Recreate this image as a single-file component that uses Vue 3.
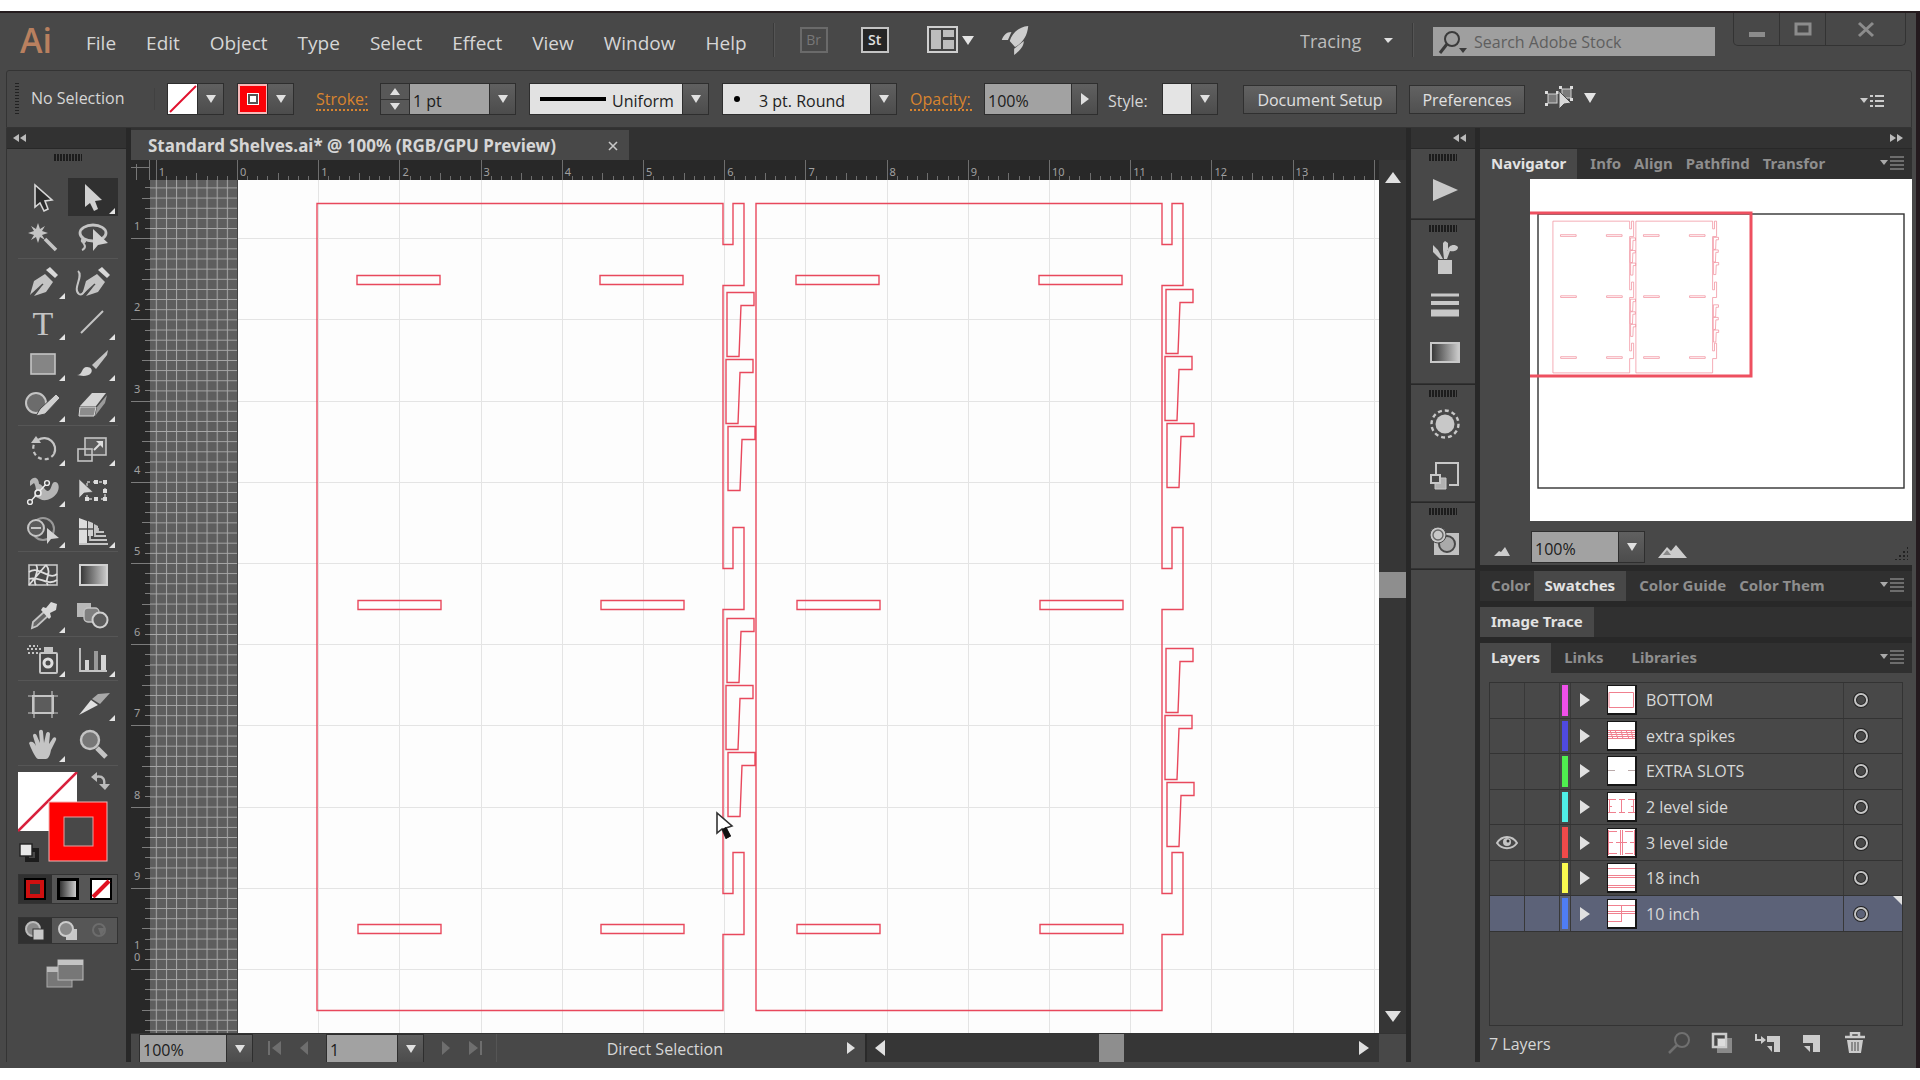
<script setup>
import { ref } from 'vue'

const menus = ['File', 'Edit', 'Object', 'Type', 'Select', 'Effect', 'View', 'Window', 'Help']

/* Tool glyphs are drawn around the origin of a 48 x 38 box. */
const g = '#c4c4c4'
const flyout = `<path d="M16 17h6v-6z" fill="#e4e4e4"/>`
const pen = `<path d="M-13 13 L-9 -1 L2 -8 L10 0 L3 10 L-9 14 L-1 4 L-13 13Z" fill="${g}"/><path d="M3 -12 L7 -15 L15 -7 L12 -4Z" fill="#d8d8d8"/><path d="M-12 13 L0 2" stroke="#484848" stroke-width="1.5"/>`
const toolGroups = [
  [
    { name: 'Selection', art: `<path d="M-8 -12V10L-3 6L1 14L5 12L2 4L9 3Z" fill="#2c2c2c" stroke="#d8d8d8" stroke-width="1.6"/>` },
    { name: 'Direct Selection', active: true, fly: true, art: `<path d="M-8 -13V10L-3 6L1 14L5 12L2 4L9 3Z" fill="#d0d0d0"/>` },
    { name: 'Magic Wand', art: `<path d="M-5 -15l2 6 5-3-3 5 6 2-6 2 3 5-5-3-2 6-2-6-5 3 3-5-6-2 6-2-3-5 5 3z" fill="${g}"/><path d="M2 1L13 12" stroke="${g}" stroke-width="3.5"/>` },
    { name: 'Lasso', art: `<ellipse cx="0" cy="-5" rx="13" ry="8" fill="none" stroke="${g}" stroke-width="2.8"/><path d="M-10 0c-4 5 3 5 2 3s-4-1-1 3-2 6-2 6" fill="none" stroke="${g}" stroke-width="2"/><path d="M0 -9V13L5 7L15 5Z" fill="#d0d0d0"/>` }
  ],
  [
    { name: 'Pen', fly: true, art: pen },
    { name: 'Curvature', art: `<g transform="translate(2 0)">${pen}</g><path d="M-15 -11c6 5-6 18 1 23 3 2 5-2 8-7" fill="none" stroke="${g}" stroke-width="2"/>` },
    { name: 'Type', fly: true, art: `<text x="0" y="12" text-anchor="middle" font-family="Liberation Serif, serif" font-size="34" fill="${g}">T</text>` },
    { name: 'Line', fly: true, art: `<path d="M-12 10L10 -12" stroke="${g}" stroke-width="2"/>` },
    { name: 'Rectangle', fly: true, art: `<rect x="-12" y="-10" width="24" height="20" fill="#858585" stroke="${g}" stroke-width="1.6"/>` },
    { name: 'Paintbrush', fly: true, art: `<path d="M-1 1L15 -14L14 -9L3 5Z" fill="${g}"/><path d="M-16 11c6 0 4-8 10-8 4 0 6 3 4 6-3 4-10 3-14 2z" fill="#d4d4d4"/>` },
    { name: 'Blob Brush', fly: true, art: `<circle cx="-7" cy="-2" r="10" fill="#6c6c6c" stroke="${g}" stroke-width="2"/><path d="M-7 11L-3 4L13 -11L17 -7L2 9Z" fill="#d0d0d0" stroke="#484848"/>` },
    { name: 'Eraser', fly: true, art: `<path d="M-13 1L-1 -12H13L3 1Z" fill="#d4d4d4"/><path d="M-13 2H3L1 11H-14Z" fill="#8c8c8c" stroke="#d8d8d8"/><path d="M4 2L14 -10L12 -2L2 11Z" fill="#9a9a9a"/>` }
  ],
  [
    { name: 'Rotate', fly: true, art: `<path d="M-5 -9A11 11 0 0 1 11 5" fill="none" stroke="${g}" stroke-width="2.2"/><path d="M11 5A11 11 0 1 1 -8 -7" fill="none" stroke="${g}" stroke-width="2.2" stroke-dasharray="4 3"/><path d="M-12 -6L-7 -13L-2 -6Z" fill="${g}"/>` },
    { name: 'Scale', fly: true, art: `<rect x="-8" y="-11" width="21" height="17" fill="#5c5c5c" stroke="${g}" stroke-width="1.6"/><rect x="-15" y="0" width="14" height="12" fill="none" stroke="${g}" stroke-width="1.6"/><path d="M1 1L8 -6" stroke="#ddd" stroke-width="2"/><path d="M3 -8H10V-1Z" fill="#ddd"/>` },
    { name: 'Width', fly: true, art: `<path d="M-13 -9C-9 -15 -4 -12 -4 -6C-1 -6 2 1 5 1C9 0 8 -8 12 -8C16 -8 17 -2 14 3C10 9 2 12 -3 9L-9 6C-6 2 -7 -4 -9 -7L-13 -4Z" fill="#b5b5b5"/><path d="M-13 12L4 -7" stroke="#eee" stroke-width="1.4"/><circle cx="-13" cy="12" r="2.4" fill="#484848" stroke="#eee" stroke-width="1.4"/><circle cx="-5" cy="3" r="3" fill="#484848" stroke="#eee" stroke-width="1.6"/><circle cx="4" cy="-7" r="2.4" fill="#484848" stroke="#eee" stroke-width="1.4"/>` },
    { name: 'Free Transform', art: `<rect x="-6" y="-8" width="18" height="17" fill="none" stroke="${g}" stroke-width="1.4" stroke-dasharray="3 3"/><path d="M1 -10h4v4h-4zM10 -10h4v4h-4zM10 -1h4v4h-4zM10 7h4v4h-4zM1 7h4v4h-4zM-8 7h4v4h-4z" fill="#ddd"/><path d="M-14 -11V8L-9 3L0 2Z" fill="#d4d4d4" stroke="#484848" stroke-width=".6"/>` },
    { name: 'Shape Builder', fly: true, art: `<circle cx="0" cy="-2" r="11" fill="none" stroke="#999" stroke-width="2"/><circle cx="-7" cy="-3" r="8" fill="#5a5a5a" stroke="${g}" stroke-width="2"/><path d="M-12 -3H-2" stroke="${g}" stroke-width="2"/><path d="M4 -3V13L8 8L16 7Z" fill="#d4d4d4"/>` },
    { name: 'Perspective Grid', fly: true, art: `<path d="M-14 -13L-6 -10V12H-14Z" fill="#ddd"/><path d="M-5 -10L0 -8V5H-5Z" fill="#d0d0d0"/><path d="M1 -7L5 -5V2H1Z" fill="${g}"/><path d="M2 0V5H13M-3 5V9H14M5 -3V1H11M-14 13H15" fill="none" stroke="${g}" stroke-width="1.8"/><path d="M-14 -2H1" stroke="#484848" stroke-width="1.4"/>` }
  ],
  [
    { name: 'Mesh', art: `<rect x="-14" y="-10" width="28" height="20" fill="#4a4a4a" stroke="${g}" stroke-width="1.6"/><path d="M-14 -3C-4 -10 6 6 14 -1M-14 4C-4 0 4 12 14 5M-7 -10C-2 -4 -12 4 -7 10M3 -10C10 -2 0 6 5 10M-14 10L-3 -3L3 -10" fill="none" stroke="#ddd" stroke-width="1.8"/>` },
    { name: 'Gradient', art: `<rect x="-13" y="-10" width="27" height="20" fill="url(#ramp)" stroke="#d0d0d0" stroke-width="2"/>` },
    { name: 'Eyedropper', fly: true, art: `<path d="M-11 12L-10 6L2 -5L6 -1L-6 10Z" fill="#666" stroke="${g}" stroke-width="1.8"/><path d="M0 -9L3 -8L8 -14L14 -12L13 -6L7 -3L8 1L6 3L-2 -6Z" fill="#d8d8d8"/>` },
    { name: 'Blend', art: `<rect x="-16" y="-13" width="14" height="14" fill="#b8b8b8"/><rect x="-9" y="-8" width="15" height="14" rx="4" fill="#808080" stroke="${g}" stroke-width="1.4"/><circle cx="7" cy="4" r="7.5" fill="#5c5c5c" stroke="#d0d0d0" stroke-width="2"/>` }
  ],
  [
    { name: 'Symbol Sprayer', fly: true, art: `<rect x="-3" y="-7" width="17" height="20" rx="1" fill="none" stroke="${g}" stroke-width="2"/><rect x="1" y="-13" width="9" height="5" fill="${g}"/><circle cx="5" cy="3" r="4" fill="none" stroke="#ddd" stroke-width="3"/><path d="M-16 -11h15M-15 -7h12M-14 -14h9" stroke="${g}" stroke-width="2" stroke-dasharray="2 2"/>` },
    { name: 'Graph', fly: true, art: `<path d="M-13 -12V11H14" fill="none" stroke="${g}" stroke-width="1.8"/><path d="M-8 0h4v10h-4zM8 -5h5v15h-5z" fill="#d4d4d4"/><path d="M1 -9h4v19h-4z" fill="#999"/>` }
  ],
  [
    { name: 'Artboard', art: `<rect x="-10" y="-8" width="20" height="17" fill="#5c5c5c" stroke="${g}" stroke-width="2"/><path d="M-9 -13V14M9 -13V14M-15 -8H15M-15 9H15" stroke="${g}" stroke-width="1.2"/>` },
    { name: 'Slice', fly: true, art: `<path d="M-14 11L-2 -4L5 1Z" fill="#e0e0e0"/><path d="M-1 -5L5 -10L17 -11L7 0Z" fill="#a8a8a8"/>` },
    { name: 'Hand', fly: true, art: `<path d="M-14 -2c2-3 6 0 7 3l-3-10c0-3 3-3 4 0l3 7-1-11c0-3 4-3 4 0l1 11 2-9c1-3 4-2 4 0l-1 10 4-6c2-2 4 0 3 2l-5 10c-1 6-3 9-5 9h-8c-3-1-8-13-9-16z" fill="${g}"/>` },
    { name: 'Zoom', art: `<circle cx="-3" cy="-5" r="9" fill="#777" stroke="${g}" stroke-width="2.4"/><path d="M4 3L13 12" stroke="${g}" stroke-width="5"/>` }
  ]
]

const dockGroups = [
  { size: 'h70', items: [`<path d="M-12 -11V11L13 0Z" fill="#c8c8c8"/>`] },
  { size: 'h164', items: [
    `<path d="M-7 2H7V16H-7Z" fill="#c8c8c8"/><path d="M-2 1L-7 -8L-12 -13L-12 -6L-5 1ZM2 1L5 -7C8 -6 13 -7 13 -11C9 -15 3 -12 3 -8L-1 -6ZM-1 1H2V-8H3V-15L0 -17L-2 -15V-8Z" fill="#c8c8c8"/>`,
    `<path d="M-14 -10H14" stroke="#c8c8c8" stroke-width="3"/><path d="M-14 -2H14" stroke="#c8c8c8" stroke-width="4"/><path d="M-14 8H14" stroke="#c8c8c8" stroke-width="7"/>`,
    `<rect x="-14" y="-9" width="28" height="19" fill="url(#ramp)" stroke="#c8c8c8" stroke-width="2"/>`
  ] },
  { size: 'h117', items: [
    `<circle r="9.5" fill="#c8c8c8"/><circle r="13.5" fill="none" stroke="#c8c8c8" stroke-width="2.4" stroke-dasharray="4 3"/>`,
    `<path d="M-9 0V-12H13V10H4" fill="none" stroke="#c8c8c8" stroke-width="2"/><path d="M-5 3H1V14H-10V9" fill="#b0b0b0" stroke="#c8c8c8"/><rect x="-14" y="0" width="9" height="8" fill="#484848" stroke="#c8c8c8" stroke-width="2"/>`
  ] },
  { size: 'h68', items: [`<rect x="-11" y="-9" width="25" height="22" fill="#c0c0c0"/><circle cx="2" cy="2" r="8" fill="#aaa" stroke="#484848" stroke-width="2"/><circle cx="-7" cy="-7" r="8" fill="#c8c8c8" stroke="#484848"/><circle cx="-7" cy="-7" r="5" fill="none" stroke="#666" stroke-width="1.4"/>`] }
]

const layers = [
  { name: 'BOTTOM', color: '#f050ea', art: 'M2 7.5H26.5V22.5H2Z' },
  { name: 'extra spikes', color: '#4f4ae0', art: 'M1 9.5H28M1 11.5H28M1 13.5H28M1 15.5H28M1 17.5H28M3 9L6 18M8 9L11 18M14 9L16 18M19 9L22 18M24 9L26 18' },
  { name: 'EXTRA SLOTS', color: '#4ff04f', art: 'M1 14.5H8M21 14.5H28', dim: true },
  { name: '2 level side', color: '#4ff0e8', art: 'M1 7.5H9M12 7.5H18M21 7.5H28M1 20.5H9M12 20.5H18M21 20.5H28M2 14.5H5M24 14.5H27M14.5 7V21M2.5 7V21M26.5 7V21' },
  { name: '3 level side', color: '#f04a4a', art: 'M2 3.5H10M18 3.5H26M1 14.5H6M9 14.5H20M23 14.5H28M2 25.5H10M18 25.5H26M13.5 2V27M15.5 2V27M1.5 2V27M27.5 2V27' },
  { name: '18 inch', color: '#fafa50', art: 'M1 5.5H28M1 12.5H28M1 14.5H28M1 22.5H28M1 24.5H28' },
  { name: '10 inch', color: '#4f7df5', art: 'M1 6.5H28M1 12.5H28M1 14.5H28M1 22.5H15M14.5 6V22' }
]
const visible = ref('3 level side')
const selected = ref('10 inch')

/* Cut lines of the shelf, in window units. */
const side = (x) => {
  const tab = (y) => `V${y + 41}H${x + 416}V${y}H${x + 427}V${y + 82}H${x + 406}`
  return `M${x} 203H${x + 406}${tab(203)}${tab(527)}${tab(852)}V1010H${x}Z`
}
const hook = (x, y) => `M${x} ${y}h27v13h-13l-2 51h-12z`
const slot = (x, y) => `M${x} ${y}h83v9h-83z`
const cuts = [
  side(317), side(756),
  ...[275, 600, 924].flatMap((y, i) => [357, 600, 796, 1039].map((x) => slot(x + (i ? 1 : 0), y))),
  hook(727, 292), hook(726, 359), hook(728, 426), hook(727, 618), hook(726, 685), hook(728, 752),
  hook(1166, 289), hook(1165, 356), hook(1167, 423), hook(1166, 648), hook(1165, 715), hook(1167, 782)
].join('')

const unit = 81.2
const majorsX = Array.from({ length: 26 }, (_, i) => ({ n: Math.abs(i - 1), x: 87 + (i - 1) * unit }))
const majorsY = Array.from({ length: 16 }, (_, i) => ({ n: i, y: -23 + i * unit }))
const labelsX = majorsX.slice(0, 15)
const labelsY = majorsY.slice(1, 10)
const ten = majorsY[10].y
const ticksX = majorsX.map(({ x }) => `M${Math.round(x) + 0.5} 0V20` + [1, 2, 3, 4, 5, 6, 7].map((k) => `M${Math.round(x + k * unit / 8) + 0.5} ${k === 4 ? 13 : 16}V20`).join('')).join('')
const ticksY = majorsY.map(({ y }) => `M0 ${Math.round(y) + 0.5}H19` + [1, 2, 3, 4, 5, 6, 7].map((k) => `M${k === 4 ? 11 : 14} ${Math.round(y + k * unit / 8) + 0.5}H19`).join('')).join('')
</script>

<template>
  <div class="page">
    <svg class="defs" width="0" height="0">
      <defs>
        <linearGradient id="ramp"><stop offset="0" stop-color="#333" /><stop offset="1" stop-color="#ccc" /></linearGradient>
      </defs>
    </svg>
    <div class="frame">
      <header class="menubar">
        <span class="logo">Ai</span>
        <nav class="menus"><button v-for="m in menus" :key="m" type="button">{{ m }}</button></nav>
        <i class="rule"></i>
        <div class="apps">
          <button type="button" class="sq off">Br</button>
          <button type="button" class="sq on">St</button>
          <button type="button" class="arrange" aria-label="Arrange documents">
            <svg width="48" height="28"><rect width="31" height="27" fill="#cfcfcf" /><path d="M2 2H29V25H2Z" fill="#444" /><path d="M4 4H14V23H4ZM16 4H27V11H16ZM16 14H27V23H16Z" fill="#bdbdbd" /><path d="M35 10H47L41 19Z" fill="#e4e4e4" /></svg>
          </button>
          <button type="button" aria-label="GPU performance">
            <svg width="30" height="30" viewBox="0 0 32 34"><path d="M31 1C20 2 13 9 10 18L16 25C25 20 30 12 31 1ZM12 8C6 8 3 12 1 17L8 17ZM26 18C26 25 20 30 15 34L15 27Z" fill="#cdcdcd" /></svg>
          </button>
        </div>
        <div class="workspace-pick">
          <select aria-label="Workspace"><option>Tracing</option></select>
          <svg width="10" height="6"><path d="M0 0H9L4 5Z" fill="#e0e0e0" /></svg>
        </div>
        <i class="rule"></i>
        <label class="search">
          <svg width="32" height="28"><circle cx="15" cy="11" r="7" fill="none" stroke="#3a3a3a" stroke-width="2" /><path d="M10 16L3 25" stroke="#3a3a3a" stroke-width="3" /><path d="M22 20H30L26 25Z" fill="#3a3a3a" /></svg>
          <input type="text" placeholder="Search Adobe Stock" aria-label="Search Adobe Stock" />
        </label>
        <div class="winbtns">
          <button type="button" aria-label="Minimize"><svg width="18" height="18"><path d="M1 12H17V17H1Z" fill="#8c8c8c" /></svg></button>
          <button type="button" aria-label="Maximize"><svg width="18" height="18"><rect x="2" y="4" width="14" height="10" fill="none" stroke="#8c8c8c" stroke-width="3" /></svg></button>
          <button type="button" aria-label="Close" class="close"><svg width="18" height="18"><path d="M2 3L16 16M16 3L2 16" stroke="#8c8c8c" stroke-width="3" /></svg></button>
        </div>
      </header>

      <section class="control">
        <i class="vgrip"></i>
        <span class="nosel">No Selection</span>
        <div class="combo fill">
          <button type="button" aria-label="Fill" class="chip"><svg width="30" height="30"><rect width="30" height="30" fill="#fff" /><path d="M2 28L28 2" stroke="#e0102c" stroke-width="2" /></svg></button>
          <button type="button" class="drop" aria-label="Fill swatches"><i class="tri"></i></button>
        </div>
        <div class="combo strokec">
          <button type="button" aria-label="Stroke color" class="chip"><svg width="30" height="30"><rect width="30" height="30" fill="#f6b8b8" /><rect x="2" y="2" width="26" height="26" fill="#fb0007" /><rect x="9" y="9" width="12" height="12" fill="#fff" /><rect x="10" y="10" width="10" height="10" fill="#555" /><rect x="12" y="12" width="6" height="6" fill="#fff" /></svg></button>
          <button type="button" class="drop" aria-label="Stroke swatches"><i class="tri"></i></button>
        </div>
        <label class="orange" for="weight">Stroke:</label>
        <div class="combo weight">
          <div class="spin"><button type="button" aria-label="Increase"><i class="tri up small"></i></button><button type="button" aria-label="Decrease"><i class="tri small"></i></button></div>
          <input id="weight" type="text" value="1 pt" />
          <button type="button" class="drop" aria-label="Weights"><i class="tri"></i></button>
        </div>
        <div class="combo profile">
          <svg width="76" height="28"><path d="M10 15H76" stroke="#000" stroke-width="4" /></svg>
          <select aria-label="Width profile"><option>Uniform</option></select>
          <span class="drop"><i class="tri"></i></span>
        </div>
        <div class="combo brush">
          <svg width="30" height="28"><circle cx="14" cy="15" r="3" /></svg>
          <select aria-label="Brush"><option>3 pt. Round</option></select>
          <span class="drop"><i class="tri"></i></span>
        </div>
        <label class="orange" for="opacity">Opacity:</label>
        <div class="combo opacity">
          <input id="opacity" type="text" value="100%" />
          <button type="button" class="drop" aria-label="Opacity slider"><i class="tri right"></i></button>
        </div>
        <span class="stylelabel">Style:</span>
        <div class="combo style">
          <button type="button" aria-label="Graphic style" class="chip plain"></button>
          <button type="button" class="drop" aria-label="Graphic styles"><i class="tri"></i></button>
        </div>
        <button type="button" class="btn setup">Document Setup</button>
        <button type="button" class="btn prefs">Preferences</button>
        <button type="button" class="similar" aria-label="Select similar">
          <svg width="52" height="24"><g fill="#7a7a7a" stroke="#cfcfcf"><rect x="3" y="8" width="9" height="9" /><rect x="17" y="3" width="9" height="9" /></g><path d="M0 5h3v3h-3zM11 5h3v3h-3zM0 17h3v3h-3zM14 0h3v3h-3zM25 0h3v3h-3zM25 12h3v3h-3z" fill="#ddd" /><path d="M14 5V23L19 18L26 17Z" fill="#d8d8d8" stroke="#484848" /><path d="M39 7H51L45 17Z" fill="#e4e4e4" /></svg>
        </button>
        <button type="button" class="panelmenu" aria-label="Control panel menu">
          <svg width="24" height="14"><path d="M0 4H8L4 9Z" fill="#ccc" /><path d="M10 2H13M10 7H13M10 12H13M15 2H24M15 7H24M15 12H24" stroke="#ccc" stroke-width="2" /></svg>
        </button>
      </section>

      <main class="work">
        <aside class="tools">
          <div class="colhead"><svg width="13" height="8"><path d="M6 0V8L0 4ZM13 0V8L7 4Z" fill="#bbb" /></svg></div>
          <div class="toolbody">
            <i class="grip"></i>
            <div v-for="(grp, gi) in toolGroups" :key="gi" class="tgroup">
              <button v-for="t in grp" :key="t.name" type="button" :aria-label="t.name" :class="{ active: t.active }">
                <svg width="48" height="38" viewBox="-24 -19 48 38" v-html="t.art + (t.fly ? flyout : '')"></svg>
              </button>
            </div>
            <svg class="fillstroke" width="100" height="92">
              <rect width="59" height="59" fill="#fff" /><path d="M0 59L59 0" stroke="#d8203c" stroke-width="2.5" />
              <rect x="31" y="30" width="58" height="59" fill="#ff0000" stroke="#f3b4b4" /><rect x="46" y="45" width="29" height="29" fill="#484848" stroke="#e8a0a0" />
              <path d="M77 5C86 3 87 8 86 14" fill="none" stroke="#bbb" stroke-width="2.4" /><path d="M73 5L79 0V10ZM81 12H92L87 18Z" fill="#bbb" />
              <rect x="9" y="78" width="10" height="10" fill="none" stroke="#1c1c1c" stroke-width="4" /><rect x="2" y="72" width="12" height="12" fill="#e8e8e8" stroke="#222" stroke-width="1.4" />
            </svg>
            <div class="modes">
              <button type="button" class="dark" aria-label="Color"><svg width="22" height="22"><rect width="22" height="22" /><rect x="4" y="4" width="14" height="14" fill="#333" stroke="#d01010" stroke-width="4" /></svg></button>
              <button type="button" aria-label="Gradient"><svg width="22" height="22"><rect width="22" height="22" /><rect x="3" y="3" width="16" height="16" fill="url(#ramp)" /></svg></button>
              <button type="button" aria-label="None"><svg width="22" height="22"><rect width="22" height="22" /><rect x="2" y="2" width="18" height="18" fill="#fff" /><path d="M3 19L19 3" stroke="#e01020" stroke-width="4" /></svg></button>
            </div>
            <div class="modes draw">
              <button type="button" class="dark" aria-label="Draw normal"><svg width="22" height="20"><circle cx="9" cy="8" r="7" fill="#8a8a8a" stroke="#bbb" stroke-width="2" /><rect x="9" y="8" width="11" height="11" fill="#c8c8c8" stroke="#333" /></svg></button>
              <button type="button" aria-label="Draw behind"><svg width="22" height="20"><rect x="9" y="8" width="11" height="11" fill="#c8c8c8" /><circle cx="9" cy="8" r="7" fill="#8a8a8a" stroke="#ccc" stroke-width="2" /></svg></button>
              <button type="button" aria-label="Draw inside"><svg width="22" height="20"><circle cx="9" cy="9" r="6" fill="none" stroke="#6c6c6c" stroke-width="2" /><path d="M8 7H16L11 15Z" fill="#6c6c6c" /></svg></button>
            </div>
            <button type="button" class="screenmode" aria-label="Screen mode"><svg width="38" height="30"><rect x="1" y="8" width="25" height="20" fill="#777" stroke="#aaa" /><path d="M1 8H26V13H1Z" fill="#bbb" /><rect x="12" y="1" width="25" height="20" fill="#777" stroke="#bbb" /><path d="M12 1H37V6H12Z" fill="#c4c4c4" /></svg></button>
          </div>
        </aside>

        <section class="doc">
          <div class="tabbar"><div class="doctab"><span>Standard Shelves.ai* @ 100% (RGB/GPU Preview)</span><button type="button" aria-label="Close document"><svg width="10" height="10"><path d="M1 1L9 9M9 1L1 9" stroke="#c8c8c8" stroke-width="1.6" /></svg></button></div></div>
          <div class="docbody">
            <div class="sheet">
              <div class="rulertop">
                <svg class="origin"><path d="M0 7.5H18M5.5 4V20M18.5 0V20" stroke="#777" /></svg>
                <svg class="rx">
                  <path :d="ticksX" stroke="#6e6e6e" />
                  <text v-for="m in labelsX" :key="m.x" :x="m.x + 3" y="16">{{ m.n }}</text>
                </svg>
              </div>
              <div class="sheetrow">
                <svg class="ry">
                  <path :d="ticksY" stroke="#7c7c7c" />
                  <text v-for="m in labelsY" :key="m.y" x="3" :y="m.y - 8">{{ m.n }}</text>
                  <text x="3" :y="ten - 20">1</text>
                  <text x="3" :y="ten - 8">0</text>
                </svg>
                <svg class="canvas">
                  <defs>
                    <pattern id="mesh" x="87" y="-23" width="10.15" height="10.15" patternUnits="userSpaceOnUse"><path d="M0.5 0V11M0 0.5H11" stroke="#a8a8a8" fill="none" /></pattern>
                  </defs>
                  <rect width="88" height="100%" fill="#5e5e5e" /><rect width="88" height="100%" fill="url(#mesh)" />
                  <rect x="88" width="100%" height="100%" fill="#fdfdfd" />
                  <path d="M87.5 0V2000" stroke="#444" />
                  <path :d="majorsX.slice(2).map((m) => `M${Math.round(m.x) + 0.5} 0V2000`).join('')" stroke="#e4e4e4" />
                  <path :d="majorsY.map((m) => `M88 ${Math.round(m.y) + 0.5}H3000`).join('')" stroke="#e4e4e4" />
                  <g transform="translate(-150 -179.5)"><path :d="cuts" fill="none" stroke="#e8485c" stroke-width="1.4" /></g>
                  <path d="M567 633V653L572 649L576 658L580 656L576 648L582 646Z" fill="#fff" stroke="#333" stroke-width="1.6" /><path d="M572 649L576 659L581 656L576 647Z" fill="#111" />
                </svg>
              </div>
            </div>
            <div class="vscroll"><button type="button" aria-label="Scroll up"><i class="tri up big"></i></button><i class="t1"></i><i class="thumb"></i><i class="t2"></i><button type="button" aria-label="Scroll down"><i class="tri big"></i></button></div>
          </div>
          <footer class="status">
            <div class="combo low zoomc"><input type="text" value="100%" aria-label="Zoom" /><button type="button" class="drop" aria-label="Zoom levels"><i class="tri"></i></button></div>
            <button type="button" class="nav" aria-label="First"><svg width="14" height="14"><path d="M1 0V14" stroke="#6e6e6e" stroke-width="2" /><path d="M13 0V14L4 7Z" fill="#6e6e6e" /></svg></button>
            <button type="button" class="nav" aria-label="Previous"><svg width="14" height="14"><path d="M10 0V14L2 7Z" fill="#6e6e6e" /></svg></button>
            <div class="combo low pagec"><input type="text" value="1" aria-label="Artboard" /><button type="button" class="drop" aria-label="Artboards"><i class="tri"></i></button></div>
            <button type="button" class="nav" aria-label="Next"><svg width="14" height="14"><path d="M4 0V14L12 7Z" fill="#6e6e6e" /></svg></button>
            <button type="button" class="nav" aria-label="Last"><svg width="14" height="14"><path d="M13 0V14" stroke="#6e6e6e" stroke-width="2" /><path d="M1 0V14L10 7Z" fill="#6e6e6e" /></svg></button>
            <div class="toolname"><span>Direct Selection</span><i class="tri right"></i></div>
            <div class="hscroll"><button type="button" aria-label="Scroll left"><i class="tri left big"></i></button><i class="t1"></i><i class="thumb"></i><i class="t2"></i><button type="button" aria-label="Scroll right"><i class="tri right big"></i></button></div>
            <i class="corner"></i>
          </footer>
        </section>

        <aside class="dock">
          <div class="colhead mid"><svg width="13" height="8"><path d="M6 0V8L0 4ZM13 0V8L7 4Z" fill="#bbb" /></svg></div>
          <div v-for="(d, di) in dockGroups" :key="di" class="dgroup" :class="d.size">
            <i class="grip"></i>
            <button v-for="(a, ai) in d.items" :key="ai" type="button" aria-label="Panel"><svg width="48" height="38" viewBox="-24 -19 48 38" v-html="a"></svg></button>
          </div>
          <div class="rest"></div>
        </aside>

        <aside class="panels">
          <div class="colhead end"><svg width="13" height="8"><path d="M0 0V8L6 4ZM7 0V8L13 4Z" fill="#bbb" /></svg></div>
          <section class="panel">
            <div class="tabs"><button type="button" class="cur">Navigator</button><button type="button">Info</button><button type="button">Align</button><button type="button">Pathfind</button><button type="button">Transfor</button><svg class="pm" width="24" height="14"><path d="M0 4H8L4 9Z" fill="#aaa" /><path d="M10 1H24M10 5H24M10 9H24M10 13H24" stroke="#aaa" /></svg></div>
            <div class="navview">
              <svg width="382" height="342">
                <rect width="382" height="342" fill="#fff" />
                <rect x="8" y="35" width="366" height="274" fill="none" stroke="#333" stroke-width="1.4" />
                <g transform="translate(-37 4) scale(0.189 0.188)"><path :d="cuts" fill="none" stroke="#f08a98" vector-effect="non-scaling-stroke" stroke-width="0.7" /></g>
                <path d="M0 34H221V197H0" fill="none" stroke="#ee5060" stroke-width="3" />
              </svg>
            </div>
            <div class="navzoom">
              <svg width="16" height="9"><path d="M0 9L5 4L7 5L11 0L16 9Z" fill="#ccc" /></svg>
              <div class="combo"><input type="text" value="100%" aria-label="Navigator zoom" /><button type="button" class="drop" aria-label="Zoom levels"><i class="tri"></i></button></div>
              <svg width="30" height="13"><path d="M0 13L9 2L13 6L18 0L29 13Z" fill="#ccc" /><path d="M5 10L9 5L13 10Z" fill="#888" /></svg>
              <i class="resize"></i>
            </div>
          </section>
          <section class="panel">
            <div class="tabs"><button type="button" class="first">Color</button><button type="button" class="cur">Swatches</button><button type="button">Color Guide</button><button type="button">Color Them</button><svg class="pm" width="24" height="14"><path d="M0 4H8L4 9Z" fill="#aaa" /><path d="M10 1H24M10 5H24M10 9H24M10 13H24" stroke="#aaa" /></svg></div>
          </section>
          <section class="panel"><div class="tabs"><button type="button" class="cur">Image Trace</button></div></section>
          <section class="panel grow">
            <div class="tabs"><button type="button" class="cur">Layers</button><button type="button">Links</button><button type="button" class="wide">Libraries</button><svg class="pm" width="24" height="14"><path d="M0 4H8L4 9Z" fill="#aaa" /><path d="M10 1H24M10 5H24M10 9H24M10 13H24" stroke="#aaa" /></svg></div>
            <div class="list">
              <ul>
                <li v-for="l in layers" :key="l.name" :class="{ sel: l.name === selected }" @click="selected = l.name">
                  <span class="eye"><svg v-if="l.name === visible" width="22" height="16"><path d="M1 8C6 0 16 0 21 8C16 15 6 15 1 8Z" fill="#484848" stroke="#c4c4c4" stroke-width="2" /><circle cx="11" cy="7" r="4" fill="#c4c4c4" /><circle cx="12" cy="6" r="1.5" fill="#333" /></svg></span>
                  <span class="lock"></span>
                  <span class="bar"><i :style="{ background: l.color }"></i></span>
                  <span class="open"><i class="tri right big"></i></span>
                  <svg class="thumbnail" width="30" height="30"><rect width="30" height="30" fill="#161616" /><rect x="1" y="1" width="27" height="27" fill="#fff" /><path :d="l.art" fill="none" :stroke="l.dim ? '#b9a9a9' : '#f0808f'" /></svg>
                  <span class="lname">{{ l.name }}</span>
                  <span class="target"><svg width="18" height="18"><circle cx="9" cy="9" r="6" fill="none" stroke="#222" stroke-width="4" /><circle cx="9" cy="9" r="6" fill="none" stroke="#c4c4c4" stroke-width="2" /></svg></span>
                  <svg class="notch" width="9" height="9"><path v-if="l.name === selected" d="M0 0H9V9Z" fill="#e0e0e0" /></svg>
                </li>
              </ul>
            </div>
            <div class="lfoot">
              <span>7 Layers</span>
              <button type="button" aria-label="Locate"><svg width="22" height="22"><circle cx="14" cy="8" r="7" fill="none" stroke="#707070" stroke-width="2" /><path d="M9 13L1 21" stroke="#707070" stroke-width="2.5" /></svg></button>
              <button type="button" aria-label="Clipping mask"><svg width="22" height="22"><rect x="6" y="6" width="15" height="15" fill="#8a8a8a" /><rect x="2" y="2" width="13" height="13" fill="none" stroke="#ccc" stroke-width="2.5" /><rect x="7" y="7" width="7" height="7" fill="#ddd" /></svg></button>
              <button type="button" aria-label="New sublayer"><svg width="26" height="22"><path d="M2 2V8H9" fill="none" stroke="#ccc" stroke-width="2" /><path d="M7 4L12 8L7 12Z" fill="#ccc" /><path d="M13 4H26V20H20V10H13Z" fill="#ccc" /><path d="M13 14H18V20Z" fill="#ccc" /></svg></button>
              <button type="button" aria-label="New layer"><svg width="22" height="22"><path d="M2 3H19V20H12V11H2Z" fill="#ccc" /><path d="M3 14H9V20Z" fill="#ccc" /></svg></button>
              <button type="button" aria-label="Delete"><svg width="22" height="22"><path d="M1 5H21M7 4V1H15V4" fill="none" stroke="#ccc" stroke-width="2.5" /><path d="M3 8H19L17 21H5Z" fill="#ccc" /><path d="M8 10V19M11 10V19M14 10V19" stroke="#484848" /></svg></button>
            </div>
          </section>
        </aside>
      </main>
    </div>
  </div>
</template>

<style>
body { margin: 0; background: #fff; }
</style>

<style scoped>
* { box-sizing: border-box; }
.page { min-height: 100vh; padding: 11px 0 12px; display: flex; background: #fff; font: 16px/20px "Open Sans", "Noto Sans", sans-serif; color: #d6d6d6; }
.defs { position: absolute; }
.frame { flex: 1; min-width: 0; display: flex; flex-direction: column; background: #484848; border-top: 2px solid #241c1e; border-right: 4px solid #241a1e; padding: 0 4px 6px 6px; }
button { font: inherit; color: inherit; background: none; border: 0; padding: 0; margin: 0; display: flex; align-items: center; justify-content: center; white-space: nowrap; }
svg { display: block; flex: none; }
i { display: block; font-style: normal; }
input, select { font: inherit; margin: 0; border: 0; border-radius: 0; background: none; outline: 0; min-width: 0; appearance: none; }

.tri { width: 0; height: 0; border: 5px solid transparent; border-top: 8px solid #e0e0e0; border-bottom: 0; }
.tri.big { border-width: 8px; border-top-width: 11px; border-bottom-width: 0; }
.tri.up { border-top: 0; border-bottom: 8px solid #e0e0e0; }
.tri.up.big { border-bottom-width: 11px; }
.tri.small { border-width: 5px; border-top-width: 7px; border-bottom-width: 0; }
.tri.up.small { border-top-width: 0; border-bottom-width: 7px; }
.tri.right { border: 6px solid transparent; border-left: 8px solid #e0e0e0; border-right: 0; }
.tri.right.big { border-width: 7px 0 7px 10px; }
.tri.left.big { border: 8px solid transparent; border-right: 10px solid #e0e0e0; border-left: 0; }

.menubar { height: 57px; display: flex; align-items: center; padding: 0 6px 4px 14px; }
.logo { width: 66px; font-size: 34px; line-height: 36px; font-weight: 600; color: #b9805f; }
.menus { display: flex; gap: 30px; font-size: 19px; line-height: 24px; margin-top: 7px; }
.rule { width: 2px; height: 34px; border-left: 1px solid #3a3a3a; border-right: 1px solid #555; }
.menus + .rule { margin-left: 26px; }
.apps { display: flex; align-items: center; margin-left: 25px; flex: 1; }
.sq { width: 28px; height: 26px; border: 2px solid #6a6a6a; color: #777; font-size: 14px; line-height: 20px; }
.sq.on { margin-left: 33px; border-color: #c4c4c4; background: #262626; color: #e0e0e0; font-weight: 600; }
.arrange { margin-left: 38px; }
.arrange + button { margin-left: 25px; }
.workspace-pick { display: flex; align-items: center; width: 112px; margin-top: 2px; }
.workspace-pick select { width: 84px; color: #bdbdbd; font-size: 18px; line-height: 24px; padding: 0; }
.search { display: flex; align-items: center; width: 282px; height: 29px; margin-left: 19px; background: #9f9f9f; padding-left: 4px; margin-top: 4px; }
.search input { flex: 1; margin-left: 3px; color: #333; }
.search input::placeholder { color: #5e5e5e; opacity: 1; }
.winbtns { display: flex; align-self: flex-start; height: 33px; margin-left: 18px; border: 1px solid #333; border-top: 0; border-radius: 0 0 5px 5px; }
.winbtns button { width: 46px; border-right: 1px solid #333; }
.winbtns .close { width: 79px; border: 0; }

.control { height: 58px; display: flex; align-items: center; border: 1px solid #343434; padding-left: 8px; border-radius: 3px 3px 0 0; }
.vgrip { width: 4px; height: 32px; background: repeating-linear-gradient(#222 0 1px, #484848 1px 3px); }
.nosel { width: 124px; margin-left: 12px; padding-bottom: 2px; border-right: 1px solid #414141; white-space: nowrap; }
.combo { display: flex; height: 32px; border: 1px solid #2e2e2e; }
.combo .drop { width: 26px; display: flex; align-items: center; justify-content: center; background: linear-gradient(#606060, #4c4c4c); border-left: 1px solid #2e2e2e; flex: none; }
.combo input { flex: 1; width: 0; background: #a2a2a2; color: #1c1c1c; padding: 3px 0 0 3px; }
.combo select { flex: 1; color: #222; padding: 3px 0 0; }
.chip { width: 30px; overflow: hidden; }
.chip.plain { background: #e4e4e4; width: 28px; }
.fill { margin-left: 12px; width: 57px; }
.strokec { margin-left: 13px; width: 57px; }
.orange { color: #d9842f; border-bottom: 2px dotted #d9842f; line-height: 19px; margin: 3px 0 0 22px; width: 52px; white-space: nowrap; }
.weight { margin-left: 12px; width: 136px; }
.spin { width: 29px; display: flex; flex-direction: column; border-right: 1px solid #2e2e2e; }
.spin button { flex: 1; background: #585858; }
.spin button + button { border-top: 1px solid #333; }
.profile { margin-left: 13px; width: 180px; background: #e2e2e2; }
.profile select { margin-left: 6px; }
.brush { margin-left: 13px; width: 175px; background: #e2e2e2; }
.brush select { margin-left: 6px; }
.brush + .orange { margin-left: 13px; width: 62px; }
.opacity { margin-left: 12px; width: 114px; }
.stylelabel { margin: 3px 0 0 10px; width: 54px; }
.style { width: 56px; }
.btn { height: 29px; margin-top: 1px; border: 1px solid #303030; background: linear-gradient(#626262, #505050); color: #e0e0e0; padding-top: 1px; }
.setup { width: 154px; margin-left: 25px; }
.prefs { width: 116px; margin-left: 12px; }
.similar { margin-left: 20px; padding-bottom: 2px; }
.panelmenu { margin: 3px 27px 0 auto; }

.work { flex: 1; display: flex; background: #282828; border-left: 1px solid #343434; }
.colhead { height: 20px; background: #323232; display: flex; align-items: center; padding: 0 6px; }
.colhead.mid { justify-content: center; padding-left: 38px; }
.colhead.end { justify-content: flex-end; padding-right: 9px; }
.grip { width: 28px; height: 7px; background: repeating-linear-gradient(90deg, #1c1c1c 0 2px, #484848 2px 3px); margin: 0 auto; flex: none; }
.tools { width: 119px; margin-right: 5px; display: flex; flex-direction: column; }
.toolbody { flex: 1; margin-top: 1px; background: #484848; padding: 5px 8px 0 11px; display: flex; flex-direction: column; }
.toolbody .grip { margin-bottom: 15px; }
.tgroup { display: grid; grid-template-columns: 1fr 1fr; grid-auto-rows: 41px; border-bottom: 1px solid #565656; margin-bottom: 2px; }
.tgroup button.active { background: #303030; height: 38px; align-self: center; }
.fillstroke { margin-top: 4px; }
.modes { display: flex; height: 30px; border: 1px solid #333; margin-top: 10px; background: #565656; }
.modes button { flex: 1; }
.modes .dark { background: #303030; }
.modes.draw { height: 27px; margin-top: 13px; }
.screenmode { margin: 15px auto 0; padding-right: 6px; }

.doc { flex: 1; min-width: 0; display: flex; flex-direction: column; }
.tabbar { height: 32px; padding-top: 2px; background: #313131; display: flex; }
.doctab { width: 498px; background: #484848; display: flex; align-items: center; justify-content: space-between; padding: 1px 11px 0 17px; font: 700 17px/20px "Noto Sans", sans-serif; white-space: nowrap; }
.docbody { flex: 1; display: flex; min-height: 600px; }
.sheet { flex: 1; min-width: 0; display: flex; flex-direction: column; }
.rulertop { height: 20px; display: flex; background: #282828; }
.origin { width: 19px; height: 20px; }
.rx { flex: 1; width: 0; height: 20px; }
.rx text, .ry text { font: 11px "Noto Sans", sans-serif; fill: #a0a0a0; }
.sheetrow { flex: 1; display: flex; }
.ry { width: 19px; height: auto; background: #282828; }
.canvas { flex: 1; width: 0; height: auto; }
.vscroll { width: 27px; background: #363636; display: flex; flex-direction: column; }
.vscroll button { height: 34px; flex: none; }
.vscroll .t1 { flex: 378; }
.vscroll .t2 { flex: 400; }
.vscroll .thumb { height: 26px; background: #8e8e8e; }
.status { height: 29px; display: flex; background: #484848; border-top: 1px solid #333; }
.combo.low { height: 28px; border-bottom: 0; }
.zoomc { width: 114px; margin-left: 8px; }
.nav { width: 30px; }
.zoomc + .nav { margin-left: 7px; }
.pagec { width: 98px; margin-left: 6px; }
.pagec + .nav { margin-left: 6px; }
.toolname { width: 369px; margin-left: 6px; display: flex; align-items: center; justify-content: flex-end; border-left: 1px solid #555; }
.toolname span { margin-right: 124px; padding-top: 2px; }
.toolname i { margin-right: 10px; }
.hscroll { flex: 1; display: flex; background: #363636; border-left: 2px solid #2a2a2a; padding-right: 2px; }
.hscroll button { width: 26px; }
.hscroll .t1 { flex: 206; }
.hscroll .t2 { flex: 227; }
.hscroll .thumb { width: 25px; background: #8e8e8e; }
.corner { width: 27px; }

.dock { width: 64px; margin: 0 5px; display: flex; flex-direction: column; }
.dgroup { background: #484848; margin-top: 1px; border-bottom: 1px solid #333; display: flex; flex-direction: column; align-items: center; padding: 5px 0 1px; }
.dgroup .grip { margin-bottom: 2px; }
.dgroup button { flex: 1; padding-left: 3px; }
.h70 { height: 70px; }
.h164 { height: 164px; padding-bottom: 8px; }
.h117 { height: 117px; }
.h68 { height: 66px; }
.rest { flex: 1; margin-top: 1px; background: #484848; }

.panels { width: 432px; display: flex; flex-direction: column; gap: 6px; }
.panels .colhead { margin-bottom: -5px; }
.panel { background: #484848; }
.tabs { height: 30px; display: flex; background: #303030; font: 700 15px/20px "Noto Sans", sans-serif; color: #8e8e8e; }
.tabs button { padding: 0 0 2px 13px; }
.tabs .first { padding-right: 3px; padding-left: 11px; }
.tabs .cur { background: #484848; color: #e2e2e2; padding: 0 11px 2px; }
.tabs .wide { padding-left: 28px; }
.pm { margin: 7px 8px 0 auto; }
.navview { display: flex; justify-content: flex-end; }
.navzoom { height: 44px; display: flex; align-items: center; padding: 8px 4px 0 14px; }
.navzoom svg { margin-top: 8px; }
.navzoom .combo { width: 114px; margin: 0 13px 0 21px; }
.resize { width: 14px; height: 14px; margin: 12px 0 0 auto; background: radial-gradient(#222 1px, transparent 1px) 0 0 / 4px 4px; clip-path: polygon(100% 0, 100% 100%, 0 100%); }
.grow { flex: 1; display: flex; flex-direction: column; }
.list { margin: 9px 9px 0; flex: 1; border: 1px solid #333; }
ul { list-style: none; margin: 0; padding: 0; display: grid; grid-auto-rows: 1fr; height: 249px; }
li { display: flex; align-items: center; border-bottom: 1px solid #333; color: #d8d8d8; }
li.sel { background: #5c6278; }
.eye, .lock { width: 35px; align-self: stretch; border-right: 1px solid #383838; display: flex; align-items: center; justify-content: center; }
.bar { width: 11px; align-self: stretch; border-right: 1px solid #383838; padding: 2px; }
.bar i { height: 100%; }
.open { width: 36px; padding-left: 9px; }
.lname { margin-left: 9px; flex: 1; }
.target { width: 50px; align-self: stretch; display: flex; align-items: center; padding-left: 8px; border-left: 1px solid #383838; }
.notch { align-self: flex-start; }
.lfoot { height: 36px; display: flex; align-items: center; padding: 0 46px 2px 9px; gap: 21px; }
.lfoot span { margin-right: auto; padding-top: 2px; }
</style>
